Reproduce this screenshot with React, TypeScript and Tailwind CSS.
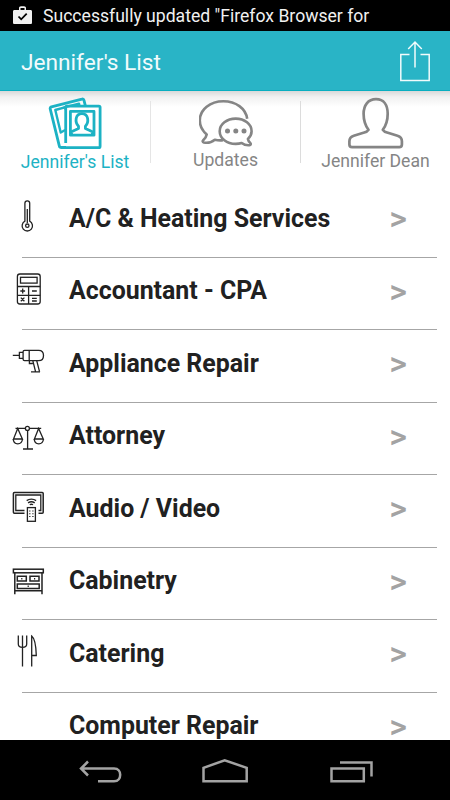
import React from 'react';

const ThermometerIcon = () => (
  <g>
    <path d="M24.9 36.2V18.3a2.4 2.4 0 0 1 4.8 0v17.9a5.2 5.2 0 1 1-4.8 0Z" />
    <path d="M27.3 24v14" />
    <circle cx="27.3" cy="40.7" r="1.7" />
  </g>
);

const CalculatorIcon = () => (
  <g>
    <rect x="17.4" y="16" width="22.8" height="30" rx="2.5" />
    <rect x="20.5" y="19.3" width="16.6" height="5.8" />
    <path d="M17.4 28.5h22.8M17.4 37.3h22.8M28.6 28.5V46" />
    <path d="M20.3 33h4.8M22.7 30.6v4.8M32 33h4.8M20.8 39.6l3.6 3.6M24.4 39.6l-3.6 3.6M32 40.3h4.8M32 43h4.8" />
  </g>
);

const DrillIcon = () => (
  <g>
    <path d="M12.8 25.4h6.4M23 22.3h-3.6v6H23M29.2 20.3v10.4" />
    <path d="M24.5 20.3h14.2c3 0 4.8 2.2 4.8 5.2s-1.8 5.2-4.8 5.2H24.5c-.8 0-1.4-.6-1.4-1.4v-7.6c0-.8.6-1.4 1.4-1.4Z" />
    <path d="M29.4 30.7v2.8h3.4M32.8 30.7l2.8 11.1M36.7 30.7l2.9 11.1M31 41.9h9" />
  </g>
);

const ScalesIcon = () => (
  <g>
    <circle cx="27.4" cy="25.4" r="2" />
    <path d="M15.5 25.4h9.9M29.4 25.4h11.8M27.6 27.5V46M23 46h10" />
    <path d="M17.7 25.4 13.5 36h8.9ZM38.6 25.4 34.4 36h8.9Z" />
    <path d="M13.3 36c0 3 2 4.8 4.5 4.8s4.6-1.8 4.6-4.8M34.3 36c0 3 2 4.8 4.5 4.8s4.6-1.8 4.6-4.8" />
  </g>
);

const TvIcon = () => (
  <g>
    <path d="M24.5 38.3H14.4c-.6 0-1-.4-1-1V18.4c0-.6.4-1 1-1h27.8c.6 0 1 .4 1 1v18.9c0 .6-.4 1-1 1h-3.7" strokeWidth="1.5" />
    <path d="M24.5 35.5h-8.7V20h25v15.5h-2.3" />
    <rect x="27.4" y="32.6" width="8" height="13.7" />
    <path d="M26.7 25.6c2.6-2 6.800-2 9.400 0M28.1 27.900c2-1.500 4.600-1.500 6.600 0M29.800 29.800c1-.7 2.200-.7 3.200 0" strokeWidth="1.4" />
    <path d="M29.8 35.5v8M32.9 35.5v8" strokeDasharray="1 1.7" />
  </g>
);

const CabinetIcon = () => (
  <g strokeWidth="1.5">
    <rect x="13.4" y="21.2" width="29.9" height="3.6" />
    <path d="M14.8 24.8v21.5M42 24.8v21.5M14.8 42.8H42" />
    <path d="M17.3 28.3h9v4.8h-9ZM30 28.3h9v4.8h-9ZM17.3 36h21.9v4.6H17.3Z" />
    <path d="M21.2 30.7h1.2M34 30.7h1.2M27.6 38.2h1.2" />
  </g>
);

const CutleryIcon = () => (
  <g>
    <path d="M18.3 15.5V24c0 2 1.5 3.4 4.2 3.4s4.2-1.4 4.2-3.4v-8.5M22.5 15.5v31" />
    <path d="M31.7 46.5V16c2.6 2 4.3 9.5 4.6 19.5h-4.6" />
  </g>
);

const PhotosIcon = () => (
  <svg viewBox="48 97 54 54" className="h-[54px] w-[54px]" fill="none" stroke="#1cb2c4" strokeWidth="2.8" strokeLinejoin="round">
    <path d="M66 147.5h-4.7c-1 0-1.8-.6-2-1.6l-9.1-37c-.3-1 .2-1.8 1.2-2.1l30.5-7.7c1-.3 1.8.2 2.1 1.2l1.5 6" />
    <path d="M65.7 110v-2.8l-10.4 2.8 5.4 22.5 4.5-2.5M79.4 105.4l-.4-1.8-16 4" strokeWidth="2.4" />
    <path d="M65.7 143V107.3c0-.7.5-1.2 1.2-1.2h32c.7 0 1.2.5 1.2 1.2v38.9c0 .9-.6 1.5-1.5 1.5H61.8" />
    <rect x="70.4" y="111.4" width="23.6" height="23.8" strokeWidth="2.8" />
    <path d="M71.5 134v-2.2l7-3.3v-2.2c-3.8-3.8-3.5-12.6 3.4-12.6s7.2 8.8 3.5 12.6v2.2l7 3.3v2.2" strokeWidth="2.8" />
  </svg>
);

const ChatIcon = () => (
  <svg viewBox="198.5 98 54 52" className="h-[52px] w-[54px]" fill="none" stroke="#858585" strokeWidth="2.6" strokeLinejoin="round">
    <path d="M222.5 140.2c-3 .4-5.8.1-8.2-.5-3 2.5-7.2 3.5-11 2.8-1.2-.3-1.5-1.5-.6-2.3 2.2-2 3.1-3.7 3.5-5.8-4.5-3.9-6.9-8.6-6.9-14 0-10.8 10.4-19.2 23.6-19.2 12.5 0 22.3 7.2 23.8 17.5" />
    <path d="M235.2 118.6c-8.9 0-16 5.5-16 12.6s7.1 12.7 16 12.7c2.2 0 4.2-.3 6-.9 2.2 1.7 5 2.5 7.8 2.2 1.2-.1 1.7-1.2.9-2-1.4-1.4-2.2-2.7-2.5-4.3 2.4-2.2 3.7-4.9 3.7-7.7 0-7.1-7-12.6-15.9-12.6Z" />
    <path d="M227 131h.01M235.3 131h.01M243.5 131h.01" strokeWidth="5" strokeLinecap="round" />
  </svg>
);

const PersonIcon = () => (
  <svg viewBox="348 97 56 52" className="h-[52px] w-[56px]" fill="none" stroke="#858585" strokeWidth="2.7" strokeLinejoin="round">
    <path d="M376 99.2c-8 0-12.4 6-12.4 14.6 0 6.8 1.9 12.1 4.9 16-1 1.8-3.1 2.4-5.1 3l-9.6 3c-3.1 1-4.4 2.5-4.4 5.4v3.2c0 1.7 1 2.7 2.7 2.7h47.1c1.7 0 2.7-1 2.7-2.7v-3.2c0-2.9-1.3-4.4-4.4-5.4l-9.6-3c-2-.6-4.1-1.2-5.1-3 3-3.9 4.9-9.2 4.9-16 0-8.6-3.7-14.6-11.7-14.6Z" />
  </svg>
);

const categories = [
  { name: 'A/C & Heating Services', icon: <ThermometerIcon /> },
  { name: 'Accountant - CPA', icon: <CalculatorIcon /> },
  { name: 'Appliance Repair', icon: <DrillIcon /> },
  { name: 'Attorney', icon: <ScalesIcon /> },
  { name: 'Audio / Video', icon: <TvIcon /> },
  { name: 'Cabinetry', icon: <CabinetIcon /> },
  { name: 'Catering', icon: <CutleryIcon /> },
  { name: 'Computer Repair', icon: null },
];

const StatusBar = () => (
  <div className="flex h-[31px] shrink-0 items-center bg-black pl-[13px] text-[#f1f1f1]">
    <svg viewBox="0 0 19 19" className="h-[19px] w-[19px]">
      <path d="M1.5 4H6V2.2C6 1 6.8.3 8 .3h3c1.2 0 2 .7 2 1.9V4h4.5c1 0 1.5.6 1.5 1.5v11c0 1-.5 1.5-1.5 1.5h-16C.5 18 0 17.5 0 16.5v-11C0 4.6.5 4 1.5 4Z" fill="#f1f1f1" />
      <path d="M7.5 4V2h4v2Z" fill="#000" />
      <path d="m5.5 10.5 2.7 2.8 5.5-5.6" fill="none" stroke="#000" strokeWidth="1.8" />
    </svg>
    <span className="ml-[11px] whitespace-nowrap pt-[2px] text-[17.6px] leading-none">Successfully updated "Firefox Browser for</span>
  </div>
);

const Header = () => (
  <header className="flex h-[60px] shrink-0 items-center justify-between border-b border-[#08aec0] bg-[#29b4c6] pl-[21px] pr-[19px]">
    <h1 className="pt-[5px] text-[22.7px] leading-none text-[#f2fbfc]">Jennifer's List</h1>
    <svg viewBox="0 0 32 42" className="h-[42px] w-8" fill="none" stroke="#f2fbfc" strokeWidth="1.5">
      <path d="M10.5 14.5H1.8v26h28.4v-26h-8.7M16 27.5V2M9.2 9 16 2l6.8 7" />
    </svg>
  </header>
);

const Tabs = () => (
  <nav className="flex h-[94px] shrink-0 bg-[linear-gradient(#d9d9d9,#f1f1f1_6px,#ffffff_16px)] text-[17.6px] leading-none text-[#858585]">
    <div className="flex w-[150px] flex-col items-center pt-[6px] text-[#1cb2c4]">
      <PhotosIcon />
      <span className="mt-[3px]">Jennifer's List</span>
    </div>
    <div className="mt-[10px] h-[62px] w-px bg-[#e5e5e5]" />
    <div className="flex w-[149px] flex-col items-center pt-[7px]">
      <ChatIcon />
      <span className="mt-[2px]">Updates</span>
    </div>
    <div className="mt-[10px] h-[62px] w-px bg-[#dcdcdc]" />
    <div className="flex w-[149px] flex-col items-center pt-[6px]">
      <PersonIcon />
      <span className="mt-1">Jennifer Dean</span>
    </div>
  </nav>
);

const NavigationBar = () => (
  <footer className="flex h-[60px] shrink-0 items-center justify-center bg-black">
    <svg viewBox="0 0 300 30" className="h-[30px] w-[300px]" fill="none" stroke="#a3a3a3" strokeWidth="2.5">
      <path d="M5.5 13.5H39c4.500 0 6.200 3.200 6.200 6.300s-1.700 6.500-6.200 6.500H23M13 6.500 6 13.500l7 7" />
      <path d="M128.500 26.300V12.800l21.200-7.500L171.700 12.800v13.500Z" />
      <path d="M256.500 13.500h32.300v12.800h-32.300ZM265 7.500h31.500v14" />
    </svg>
  </footer>
);

export default function App() {
  return (
    <div className="flex h-[800px] w-[450px] flex-col overflow-hidden bg-white font-['Roboto',sans-serif]">
      <StatusBar />
      <Header />
      <Tabs />
      <main className="min-h-0 flex-1 overflow-hidden">
        {categories.map((category) => (
          <div key={category.name} className="flex h-[72.5px] flex-col">
            <div className="flex min-h-0 flex-1 items-center">
              <svg viewBox="0 0 69 72" className="h-[72px] w-[69px] shrink-0 self-start" fill="none" stroke="#222" strokeWidth="1.3">
                {category.icon}
              </svg>
              <span className="mb-[3px] whitespace-nowrap text-[24.9px] font-bold leading-none text-[#212121]">{category.name}</span>
              <span className="mb-[5px] ml-auto mr-[43px] text-[34px] font-medium leading-none text-[#a3a3a3]">&gt;</span>
            </div>
            <div className="ml-[22px] mr-[13px] h-px shrink-0 bg-[#a6a6a6]" />
          </div>
        ))}
      </main>
      <NavigationBar />
    </div>
  );
}
